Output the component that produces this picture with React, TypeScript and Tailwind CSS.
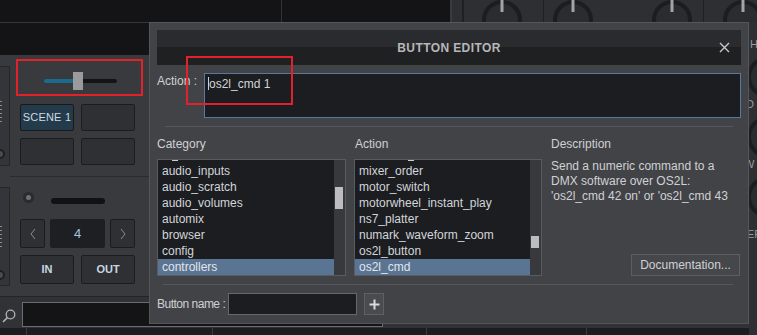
import { ReactNode } from 'react';

const FONT = { fontFamily: '"Liberation Sans", Arial, sans-serif' };

const categories = ['audio_inputs', 'audio_scratch', 'audio_volumes', 'automix', 'browser', 'config', 'controllers'];
const actions = [
  'mixer_order',
  'motor_switch',
  'motorwheel_instant_play',
  'ns7_platter',
  'numark_waveform_zoom',
  'os2l_button',
  'os2l_cmd',
];

function TopKnobs() {
  const knobs = [52, 123, 222, 293];
  return (
    <svg width="307" height="22" className="block">
      <rect width="307" height="22" fill="#2e2f33" />
      <rect x="0" width="2" height="22" fill="#3a3b3f" />
      <rect x="12" width="2" height="22" fill="#1f2023" />
      <rect x="93" width="1" height="22" fill="#1f2023" />
      <rect x="253" width="1" height="22" fill="#1f2023" />
      {knobs.map((x) => (
        <g key={x}>
          <circle cx={x} cy="20" r="18" fill="#2b2c30" stroke="#1c1d20" strokeWidth="4" />
          <line x1={x} y1="0" x2={x} y2="12" stroke="#a4a4a6" strokeWidth="3" />
        </g>
      ))}
    </svg>
  );
}

function SideKnobs() {
  return (
    <div className="relative h-full w-full overflow-hidden bg-[#2e2f33] text-[11px] text-[#9a9b9e]">
      <svg width="8" height="313" className="absolute inset-0">
        {[55, 115, 175].map((y) => (
          <circle key={y} cx="19" cy={y} r="19" fill="#2b2c30" stroke="#1c1d20" strokeWidth="4" />
        ))}
      </svg>
      <span className="absolute left-[1px] top-[14px]">H</span>
      <span className="absolute left-[-3px] top-[74px]">D</span>
      <span className="absolute left-[-5px] top-[134px]">W</span>
      <span className="absolute left-[-2px] top-[204px]">EF</span>
    </div>
  );
}

function DeckButton({ children, className = '' }: { children?: ReactNode; className?: string }) {
  return (
    <div
      className={`flex items-center justify-center rounded-[2px] border border-[#1b1c1e] bg-[#2f3034] ${className}`}
    >
      {children}
    </div>
  );
}

function Chevron({ right = false }: { right?: boolean }) {
  return (
    <svg width="6" height="12" viewBox="0 0 6 12">
      <polyline
        points={right ? '1,1 5,6 1,11' : '5,1 1,6 5,11'}
        fill="none"
        stroke="#8c8d90"
        strokeWidth="1"
      />
    </svg>
  );
}

function LeftPanel() {
  return (
    <div className="flex h-full w-[149px] flex-col">
      <div className="h-[33px] border-t border-[#36373b] bg-[#141416]" />
      <div className="flex flex-1 bg-[#393a3e]">
        <div className="flex w-[10px] flex-col">
          <div className="mt-[11px] flex h-[100px] flex-col items-start border-r border-y border-[#25262a] bg-[#34353a]">
            <div className="ml-[-1px] mt-[34px] flex flex-col gap-[3px]">
              {[0, 1, 2, 3, 4, 5].map((i) => (
                <div key={i} className="h-px w-[3px] bg-[#8a8b8e]" />
              ))}
            </div>
            <div className="ml-[-5px] mt-auto mb-[6px] h-[10px] w-[10px] rounded-full border-2 border-[#1e1f22] bg-[#4a4b4f]" />
          </div>
          <div className="mt-[21px] flex h-[99px] flex-col items-start border-r border-y border-[#25262a] bg-[#34353a]">
            <div className="ml-[-1px] mt-[38px] flex flex-col gap-[3px]">
              {[0, 1, 2, 3, 4, 5].map((i) => (
                <div key={i} className="h-px w-[3px] bg-[#8a8b8e]" />
              ))}
            </div>
            <div className="ml-[-5px] mt-auto mb-[5px] h-[10px] w-[10px] rounded-full border-2 border-[#1e1f22] bg-[#4a4b4f]" />
          </div>
        </div>
        <div className="flex flex-1 flex-col">
          <div className="flex flex-col pl-[10px]">
            <div className="h-[49px] pt-[17px]">
              <div className="relative ml-[24px] h-[18px] w-[73px]">
                <div className="absolute left-0 right-0 top-[7px] flex h-[4px] overflow-hidden rounded-full">
                  <div className="w-[34px] bg-[#1c6a8e]" />
                  <div className="flex-1 bg-[#141416]" />
                </div>
                <div className="absolute left-[29px] top-0 h-[18px] w-[10px] bg-[#9b9b9d]" />
              </div>
            </div>
            <div className="grid grid-cols-[54px_54px] grid-rows-[27px_27px] gap-[7px]">
              <DeckButton className="border-[#17191b] bg-[#233b4b] text-[11px] tracking-[0.2px] text-[#cfd9e2]">
                SCENE 1
              </DeckButton>
              <DeckButton />
              <DeckButton />
              <DeckButton />
            </div>
          </div>
          <div className="mt-[11px] h-px bg-[#2a2b2e]" />
          <div className="flex flex-col pl-[10px]">
            <div className="mt-[15px] flex h-[11px] items-start">
              <div className="ml-[3px] h-[11px] w-[11px] rounded-full border-[3px] border-[#2a2b2e] bg-[#707174]" />
              <div className="ml-[17px] mt-[6px] h-[6px] w-[54px] rounded-full bg-[#121214]" />
            </div>
            <div className="mt-[16px] flex h-[29px] gap-[5px]">
              <DeckButton className="w-[25px]">
                <Chevron />
              </DeckButton>
              <div className="flex w-[55px] items-center justify-center rounded-[2px] bg-[#1e1f22] text-[13px] text-[#a9c3da]">
                4
              </div>
              <DeckButton className="w-[25px]">
                <Chevron right />
              </DeckButton>
            </div>
            <div className="mt-[7px] grid h-[29px] grid-cols-[54px_54px] gap-[7px]">
              <DeckButton className="text-[11px] font-bold text-[#c6d6e4]">IN</DeckButton>
              <DeckButton className="text-[11px] font-bold text-[#c6d6e4]">OUT</DeckButton>
            </div>
          </div>
        </div>
      </div>
    </div>
  );
}

function ListBox({
  items,
  hiddenPad,
  thumbTop,
  thumbHeight,
}: {
  items: string[];
  hiddenPad: string;
  thumbTop: string;
  thumbHeight: string;
}) {
  return (
    <div className="flex h-[117px] border border-[#5a5b5f] bg-[#1c1d20]">
      <div className="flex-1 overflow-hidden">
        {/* tail of the item scrolled out above */}
        <div className="h-[3px]">
          <div className={`h-px w-[6px] bg-[#c8ccd0] ${hiddenPad}`} />
        </div>
        {items.map((it, i) => (
          <div
            key={it}
            className={`h-[16px] pl-[4px] leading-[16px] ${
              i === items.length - 1 ? 'bg-[#5a7494] text-[#e2e6ea]' : 'text-[#d2d5d9]'
            }`}
          >
            {it}
          </div>
        ))}
      </div>
      <div className="w-[11px] bg-[#38393d] pl-[1px]">
        <div className={`w-[8px] bg-[#bdbdc0] ${thumbTop} ${thumbHeight}`} />
      </div>
    </div>
  );
}

function ButtonEditor() {
  return (
    <div className="absolute left-[149px] top-[22px] w-[600px] border border-[#55565a] bg-[#424347] px-[7px] pb-[8px] pt-[7px] text-[12px]">
      <div className="grid h-[35px] grid-cols-[1fr_auto_1fr] items-center bg-[linear-gradient(to_bottom,#2a2b2e_0%,#2a2b2e_49%,#1f2022_49%,#1f2022_100%)]">
        <div />
        <div className="text-[12px] font-bold tracking-[0.4px] text-[#b7b7b9]">BUTTON EDITOR</div>
        <div className="flex justify-end pr-[11px]">
          <svg width="11" height="11" viewBox="0 0 11 11">
            <path d="M1 1L10 10M10 1L1 10" stroke="#c9c9cb" strokeWidth="1.4" />
          </svg>
        </div>
      </div>

      <div className="mt-[8px] flex">
        <div className="w-[47px] shrink-0 whitespace-nowrap pt-[1px] leading-[14px] text-[#cfd0d3]">Action :</div>
        <div className="h-[45px] flex-1 border border-[#58789e] bg-[#1c1d20] pl-[3px] pt-[1px] leading-[14px] text-[#d3d4d7]">
          <span className="inline-block h-[13px] w-px translate-y-[2px] bg-[#d0d0d0]" />
          os2l_cmd 1
        </div>
      </div>

      <div className="ml-[8px] mr-[8px] mt-[8px] h-px bg-[#56575b]" />

      <div className="mt-[10px] grid grid-cols-[189px_188px_190px] gap-x-[8px]">
        <div>
          <div className="h-[14px] leading-[14px] text-[#cfd0d3]">Category</div>
          <div className="mt-[8px]">
            <ListBox items={categories} hiddenPad="ml-[14px]" thumbTop="mt-[27px]" thumbHeight="h-[22px]" />
          </div>
        </div>
        <div>
          <div className="h-[14px] pl-[1px] leading-[14px] text-[#cfd0d3]">Action</div>
          <div className="mt-[8px]">
            <ListBox items={actions} hiddenPad="ml-[53px]" thumbTop="mt-[76px]" thumbHeight="h-[12px]" />
          </div>
        </div>
        <div className="ml-[1px] flex flex-col">
          <div className="h-[14px] leading-[14px] text-[#cfd0d3]">Description</div>
          <div className="mt-[8px] whitespace-nowrap leading-[15px] text-[#d0d1d4]">
            <div>Send a numeric command to a</div>
            <div>DMX software over OS2L:</div>
            <div>'os2l_cmd 42 on' or 'os2l_cmd 43</div>
          </div>
          <div className="mt-auto flex justify-end">
            <div className="flex h-[22px] w-[109px] items-center justify-center border border-[#5d5e62] bg-[#46474b] text-[#d0d1d4]">
              Documentation...
            </div>
          </div>
        </div>
      </div>

      <div className="ml-[6px] mr-[8px] mt-[8px] h-px bg-[#56575b]" />

      <div className="mt-[8px] flex h-[22px] items-center">
        <div className="w-[71px] shrink-0 whitespace-nowrap tracking-[-0.5px] text-[#cfd0d3]">Button name :</div>
        <div className="h-[22px] w-[129px] shrink-0 border border-[#67686c] bg-[#1c1d20]" />
        <div className="ml-[7px] flex h-[22px] w-[20px] shrink-0 items-center justify-center border border-[#5f6064] bg-[#4a4b4f]">
          <svg width="11" height="11" viewBox="0 0 11 11">
            <path d="M5.5 0.5V10.5M0.5 5.5H10.5" stroke="#dadadc" strokeWidth="2" />
          </svg>
        </div>
      </div>
    </div>
  );
}

export default function App() {
  return (
    <div className="relative flex h-[335px] w-[757px] flex-col overflow-hidden bg-[#141416]" style={FONT}>
      <div className="flex h-[22px]">
        <div className="flex w-[450px] bg-[#141416]">
          <div className="w-[282px] border-r border-[#333437]" />
        </div>
        <TopKnobs />
      </div>

      <div className="flex h-[313px]">
        <div className="flex w-[749px] flex-col">
          <div className="flex h-[274px]">
            <LeftPanel />
            <div className="flex-1 bg-[#2e2f33]" />
          </div>
          <div className="flex h-[32px] border-t border-[#232427] bg-[#313236]">
            <div className="flex w-[22px] items-start pl-[2px] pt-[12px]">
              <svg width="14" height="14" viewBox="0 0 14 14">
                <circle cx="8.5" cy="5.5" r="4.3" fill="none" stroke="#b0b1b4" strokeWidth="1.3" />
                <line x1="5.4" y1="8.6" x2="1" y2="13" stroke="#b0b1b4" strokeWidth="1.6" />
              </svg>
            </div>
            <div className="mt-[5px] h-[25px] w-[361px] border border-[#6b6c70] bg-[#141416]" />
          </div>
          <div className="flex h-[7px] bg-[#1c1d20]">
            <div className="w-[27px] border-r border-[#3a3b3f]" />
            <div className="w-[186px] border-r border-[#3a3b3f]" />
            <div className="w-[214px] border-r border-[#3a3b3f]" />
            <div className="w-[160px] border-r border-[#3a3b3f]" />
          </div>
        </div>
        <div className="w-[8px]">
          <SideKnobs />
        </div>
      </div>

      <ButtonEditor />

      <div className="absolute left-[16px] top-[59px] h-[37px] w-[127px] border-2 border-[#e3212b]" />
      <div className="absolute left-[186px] top-[56px] h-[49px] w-[107px] border-2 border-[#e3212b]" />
    </div>
  );
}
